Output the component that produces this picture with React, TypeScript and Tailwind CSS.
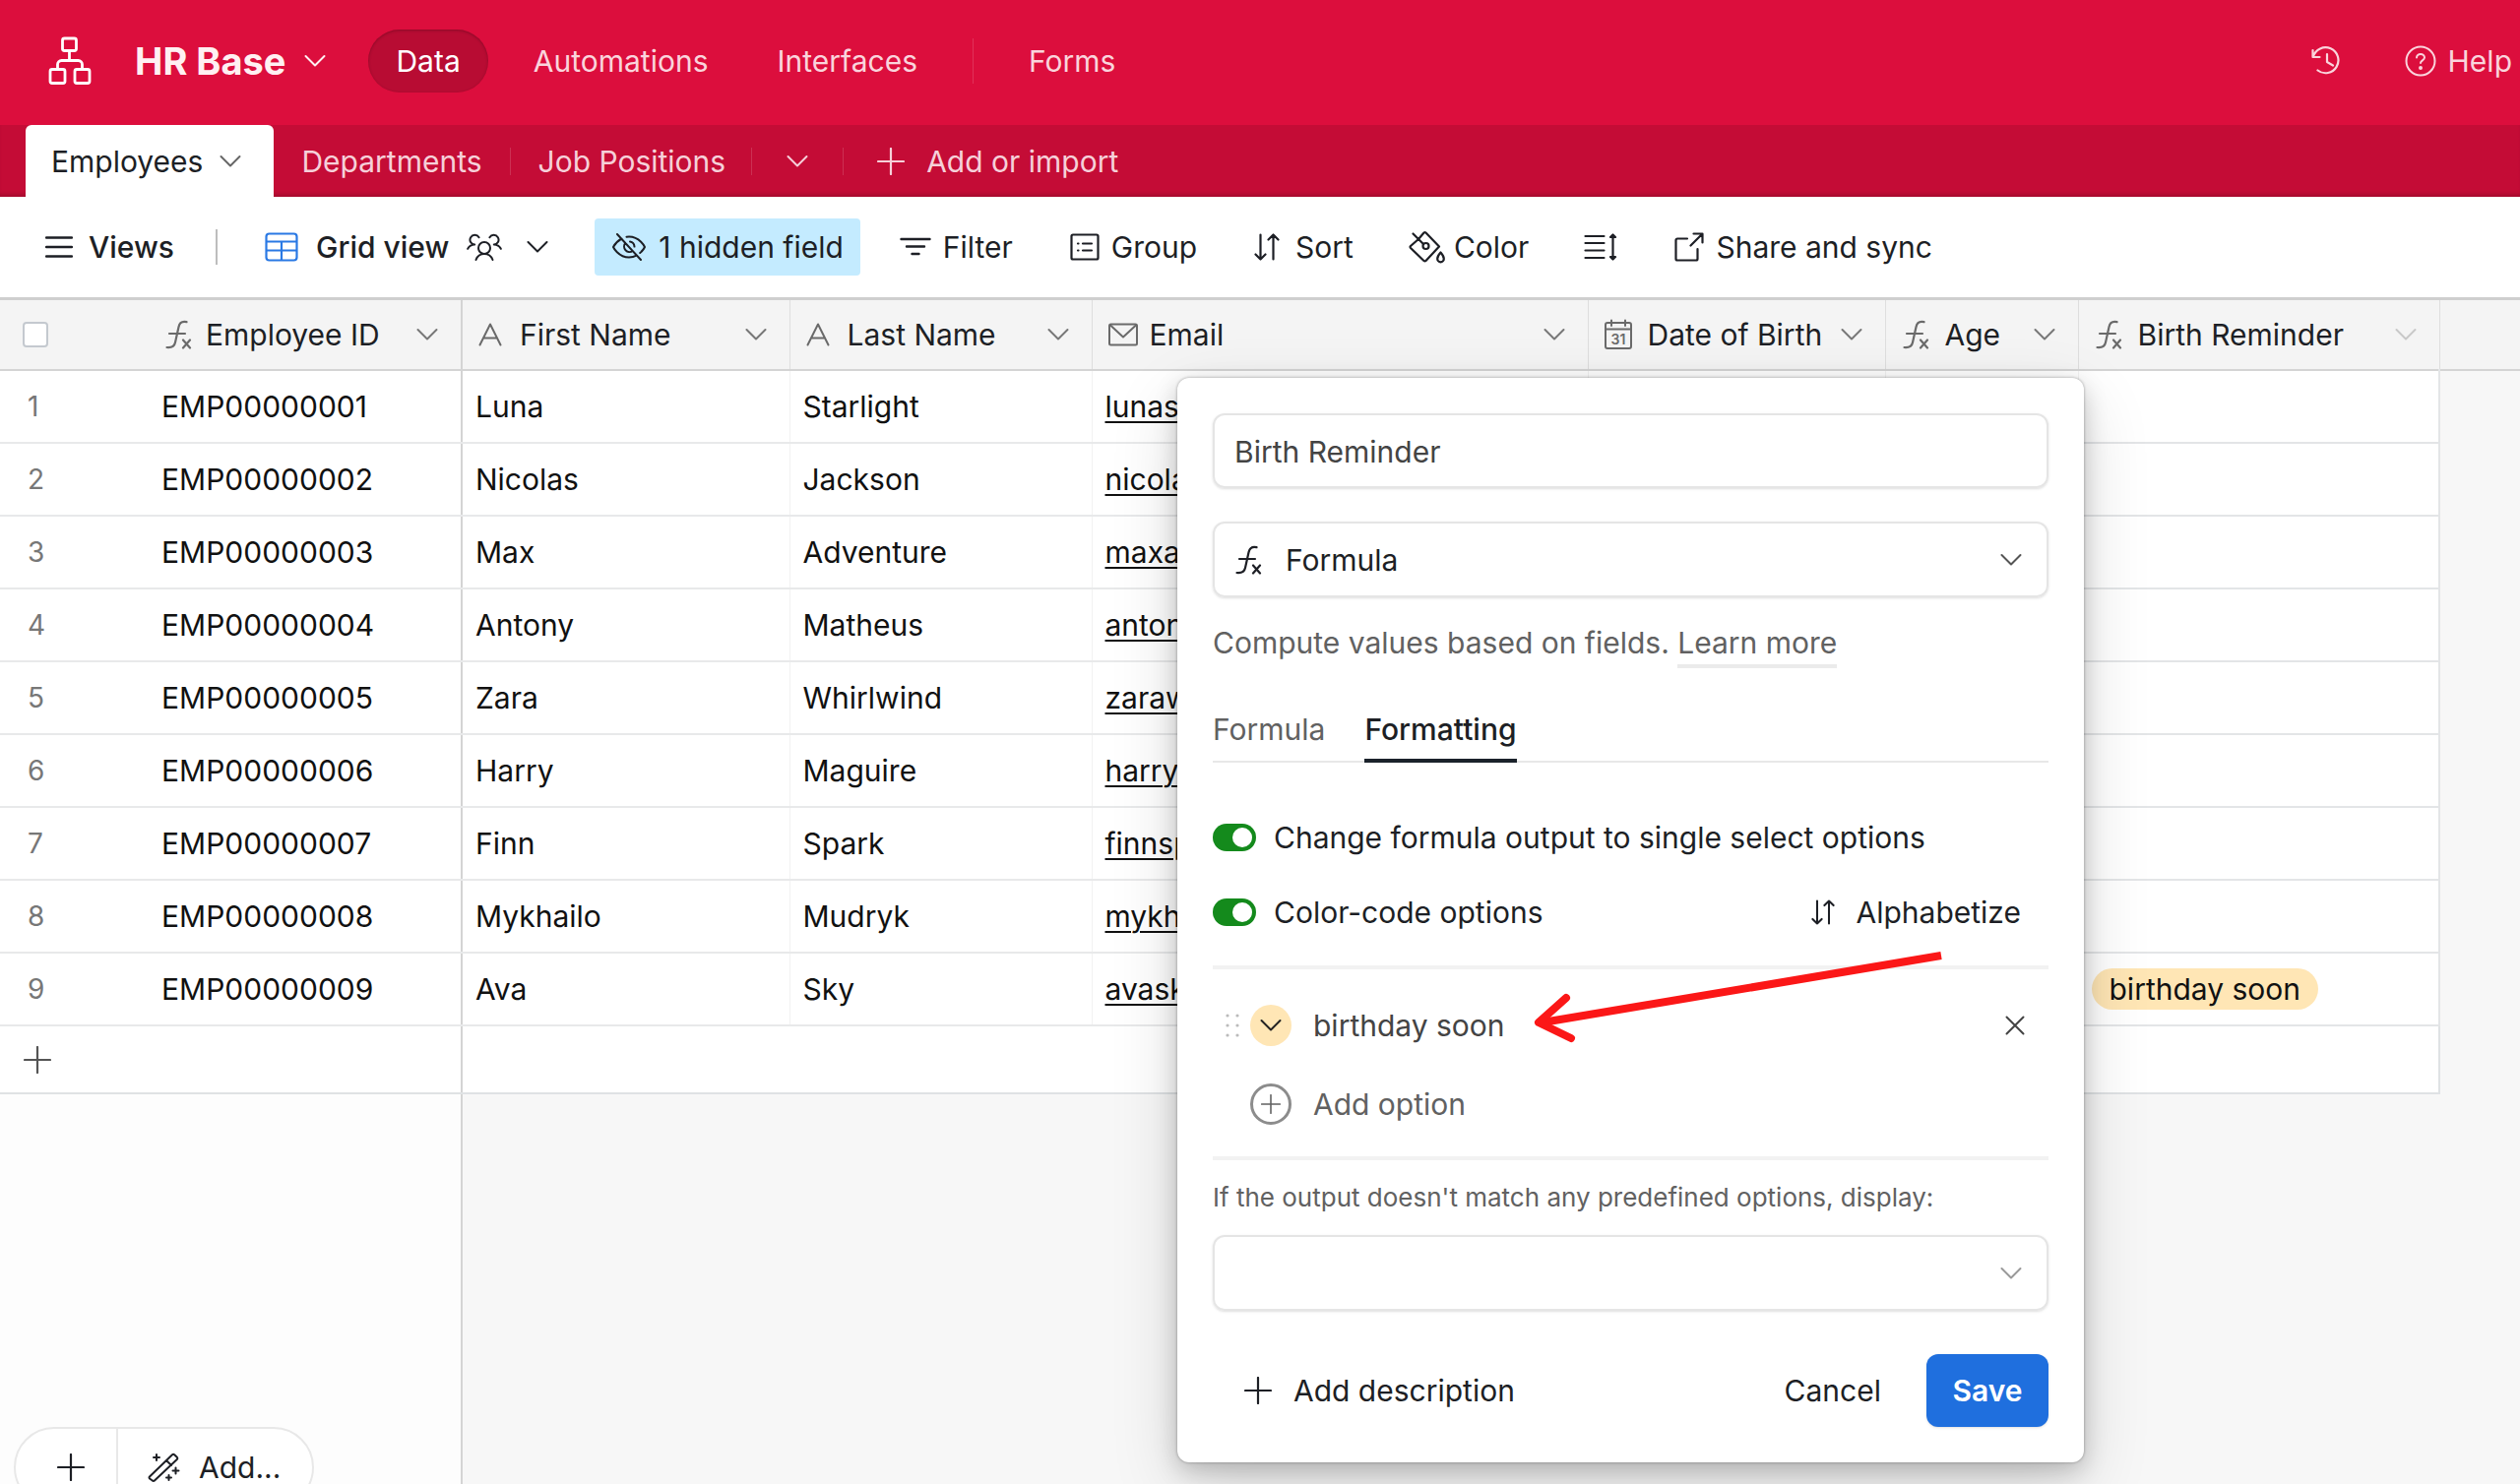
import { useState } from 'react';

const people: [string, string, string][] = [
  ['Luna', 'Starlight', 'lunast'],
  ['Nicolas', 'Jackson', 'nicola'],
  ['Max', 'Adventure', 'maxad'],
  ['Antony', 'Matheus', 'anton'],
  ['Zara', 'Whirlwind', 'zaraw'],
  ['Harry', 'Maguire', 'harry'],
  ['Finn', 'Spark', 'finnsp'],
  ['Mykhailo', 'Mudryk', 'mykh'],
  ['Ava', 'Sky', 'avask'],
];

type IconProps = { className?: string };

const Chevron = ({ className = '' }: IconProps) => (
  <svg viewBox="0 0 24 14" className={`h-3.5 w-6 shrink-0 ${className}`} fill="none" stroke="currentColor" strokeWidth="2" strokeLinecap="round" strokeLinejoin="round">
    <path d="M2.5 2l9.5 9.5L21.500 2" />
  </svg>
);

const Plus = ({ className = 'h-7 w-7' }: IconProps) => (
  <svg viewBox="0 0 28 28" className={`shrink-0 ${className}`} fill="none" stroke="currentColor" strokeWidth="2.2" strokeLinecap="round">
    <path d="M14 1v26M1 14h26" />
  </svg>
);

const Fx = () => (
  <svg viewBox="0 0 28 30" className="h-[30px] w-7 shrink-0" fill="none" stroke="currentColor" strokeWidth="2.2" strokeLinecap="round">
    <path d="M22.500 2.200c-5-1-7.200 1-8 5L11 23c-.8 4-3 5.500-8.500 5M5 14h16M19 20.500l7 8M26 20.500l-7 8" />
  </svg>
);

const LetterA = () => (
  <svg viewBox="0 0 24 24" className="h-6 w-6 shrink-0" fill="none" stroke="currentColor" strokeWidth="2" strokeLinecap="round" strokeLinejoin="round">
    <path d="M1.500 22.500L12 1.500l10.500 21M5.200 15.500h13.600" />
  </svg>
);

const Mail = () => (
  <svg viewBox="0 0 30 24" className="h-6 w-[30px] shrink-0" fill="none" stroke="currentColor" strokeWidth="2" strokeLinejoin="round">
    <rect x="1" y="1.500" width="28" height="21" rx="1.500" />
    <path d="M1.500 2L15 14.500 28.500 2" />
  </svg>
);

const Calendar = () => (
  <svg viewBox="0 0 28 32" className="h-8 w-7 shrink-0" fill="none" stroke="currentColor" strokeWidth="2" strokeLinecap="round" strokeLinejoin="round">
    <rect x="1" y="4" width="26" height="26" rx="2" />
    <path d="M1 10.500h26M7 1.500v5.500M21 1.500v5.500" />
    <text x="14" y="25.500" textAnchor="middle" fontSize="14" fontWeight="600" fill="currentColor" stroke="none">31</text>
  </svg>
);

const Logo = () => (
  <svg viewBox="0 0 44 50" className="h-[50px] w-11 shrink-0" fill="none" stroke="currentColor" strokeWidth="2.800" strokeLinejoin="round">
    <rect x="14.500" y="2" width="14" height="12.500" rx="2" />
    <rect x="2" y="33.500" width="15" height="14" rx="2" />
    <rect x="27" y="33.500" width="15" height="14" rx="2" />
    <path d="M21.500 14.500v10M9.500 33.500v-5a4 4 0 0 1 4-4h17a4 4 0 0 1 4 4v5" />
  </svg>
);

const History = () => (
  <svg viewBox="0 0 32 32" className="h-8 w-8 shrink-0" fill="none" stroke="currentColor" strokeWidth="2.200" strokeLinecap="round" strokeLinejoin="round">
    <path d="M2.500 5v7h7M3 11.500A13 13 0 1 1 7.500 25.500M17 9v8l6 3.500" />
  </svg>
);

const Help = () => (
  <svg viewBox="0 0 32 32" className="h-8 w-8 shrink-0" fill="none" stroke="currentColor" strokeWidth="2" strokeLinecap="round">
    <circle cx="16" cy="16" r="14.500" />
    <path d="M12 12.500c0-2 1.800-3.500 4-3.500s4 1.500 4 3.600c0 2.600-4 3-4 5.400" />
    <circle cx="16" cy="23" r="1" fill="currentColor" />
  </svg>
);

const Lines = () => (
  <svg viewBox="0 0 28 24" className="h-6 w-7 shrink-0" stroke="currentColor" strokeWidth="2.400" strokeLinecap="round">
    <path d="M1 2.500h26M1 12h26M1 21.500h26" />
  </svg>
);

const GridIcon = () => (
  <svg viewBox="0 0 34 30" className="h-[30px] w-[34px] shrink-0 text-[#2a79e4]" fill="none" stroke="currentColor" strokeWidth="2.200">
    <rect x="1.500" y="1.500" width="31" height="27" rx="3" />
    <path d="M1.500 9.500h31M1.500 18.500h31M17 9.500v19" />
  </svg>
);

const People = () => (
  <svg viewBox="0 0 36 28" className="h-7 w-9 shrink-0" fill="none" stroke="currentColor" strokeWidth="2" strokeLinecap="round" strokeLinejoin="round">
    <circle cx="18" cy="15" r="6" />
    <path d="M9.500 27c1.500-4 4.700-6 8.500-6s7 2 8.500 6M1.200 15.800c1.500-2.800 3.800-4.200 7-4.200a4.900 4.900 0 1 1 4.400-7.400M34.800 15.800c-1.500-2.800-3.800-4.200-7-4.200a4.900 4.900 0 1 0-4.400-7.400" />
  </svg>
);

const EyeOff = () => (
  <svg viewBox="0 0 36 28" className="h-7 w-9 shrink-0" fill="none" stroke="currentColor" strokeWidth="2" strokeLinecap="round" strokeLinejoin="round">
    <path d="M6 1l24 26M10.500 5.500C5 8.500 2 14 2 14s5 10.500 16 10.500c3 0 5.500-.7 7.600-1.800M15.500 3.700A17 17 0 0 1 18 3.500c11 0 16 10.500 16 10.500s-1.500 3.200-4.800 6M14.300 10a5.500 5.500 0 0 0 7.400 8M19 8.600a5.500 5.500 0 0 1 4.500 5" />
  </svg>
);

const FilterIcon = () => (
  <svg viewBox="0 0 32 20" className="h-5 w-8 shrink-0" stroke="currentColor" strokeWidth="2.400" strokeLinecap="round">
    <path d="M1.500 2h29M7 9.500h18M12.500 17h7" />
  </svg>
);

const GroupIcon = () => (
  <svg viewBox="0 0 30 28" className="h-7 w-[30px] shrink-0" fill="none" stroke="currentColor" strokeWidth="2.200" strokeLinecap="round">
    <rect x="1.500" y="1.500" width="27" height="25" rx="1.500" />
    <path d="M13 10.500h9M13 17.500h9M8 10.500h.5M8 17.500h.5" />
  </svg>
);

const SortIcon = ({ className = 'h-7 w-[26px]' }: IconProps) => (
  <svg viewBox="0 0 26 28" className={`shrink-0 ${className}`} fill="none" stroke="currentColor" strokeWidth="2.200" strokeLinecap="round" strokeLinejoin="round">
    <path d="M6.500 1.500v25M1.500 21.500l5 5 5-5M19.500 26.500v-25M14.500 6.500l5-5 5 5" />
  </svg>
);

const Bucket = () => (
  <svg viewBox="0 0 38 34" className="h-[34px] w-[38px] shrink-0" fill="none" stroke="currentColor" strokeWidth="2.200" strokeLinecap="round" strokeLinejoin="round">
    <path d="M4.500 3.500l10.500 10.500M10 9l5.500-6.500a1.500 1.500 0 0 1 2 0L31 16.500 17.500 31a1.500 1.500 0 0 1-2 0L2 18a1.500 1.500 0 0 1 0-2z" />
    <circle cx="17.500" cy="16" r="3" />
    <path d="M32.500 22.500s3.300 3.800 3.300 6.500a3.300 3.300 0 0 1-6.600 0c0-2.700 3.300-6.500 3.300-6.500z" />
  </svg>
);

const RowHeight = () => (
  <svg viewBox="0 0 34 28" className="h-7 w-[34px] shrink-0" fill="none" stroke="currentColor" strokeWidth="2.200" strokeLinecap="round" strokeLinejoin="round">
    <path d="M1.500 3h19M1.500 10h19M1.500 17.500h19M1.500 25h19M29.500 2v24" />
    <path d="M27 4l2.500-2.500L32 4zM27 24l2.500 2.500L32 24z" fill="currentColor" />
  </svg>
);

const Share = () => (
  <svg viewBox="0 0 30 30" className="h-[30px] w-[30px] shrink-0" fill="none" stroke="currentColor" strokeWidth="2.200" strokeLinecap="round" strokeLinejoin="round">
    <path d="M19.500 1.500h9v9M28 2L16.500 13.500M23.500 17v10a1.500 1.500 0 0 1-1.500 1.500H3A1.500 1.500 0 0 1 1.500 27V8A1.500 1.500 0 0 1 3 6.500h10" />
  </svg>
);

const Wand = () => (
  <svg viewBox="0 0 34 30" className="h-[30px] w-[34px] shrink-0" fill="none" stroke="currentColor" strokeWidth="2" strokeLinecap="round" strokeLinejoin="round">
    <path d="M2 24.500L25 2.200a1.500 1.500 0 0 1 2.200 0l2.600 2.600a1.500 1.500 0 0 1 0 2.200L7 28.500a1.500 1.500 0 0 1-2.200 0L2 26.500a1.500 1.500 0 0 1 0-2zM19 8l5 5M9 2v6M6 5h6M28.500 15.500v6M25.500 18.500h6M21.500 23v5M19 25.500h5" />
  </svg>
);

const columns = [
  { label: 'First Name', icon: LetterA, width: 'w-[333px]', gap: 'gap-[18px]' },
  { label: 'Last Name', icon: LetterA, width: 'w-[307px]', gap: 'gap-[18px]' },
  { label: 'Email', icon: Mail, width: 'w-[504px]', gap: 'gap-3' },
  { label: 'Date of Birth', icon: Calendar, width: 'w-[302px]', gap: 'gap-4' },
  { label: 'Age', icon: Fx, width: 'w-[196px]', gap: 'gap-4' },
  { label: 'Birth Reminder', icon: Fx, width: 'w-[367px]', gap: 'gap-4' },
];

function TopBar() {
  return (
    <header className="flex h-[127px] items-center bg-[#dc0e3d] pb-1 pl-[49px] pr-2 text-[#fad4dc]">
      <span className="text-white"><Logo /></span>
      <button className="ml-11 flex items-center gap-[18px] text-[38px] font-bold text-[#fff0f2]">HR Base <Chevron /></button>
      <nav className="ml-[42px] flex items-center">
        <a href="#data" className="rounded-full bg-[#b80c33] px-7 py-3 leading-10 text-white shadow-[inset_0_1px_3px_rgba(0,0,0,0.25)]">Data</a>
        <a href="#automations" className="ml-[46px]">Automations</a>
        <a href="#interfaces" className="ml-[70px]">Interfaces</a>
        <span className="ml-14 h-[46px] w-px bg-white/15" />
        <a href="#forms" className="ml-14">Forms</a>
      </nav>
      <button aria-label="History" className="ml-auto"><History /></button>
      <button className="ml-16 flex items-center gap-3"><Help /> Help</button>
    </header>
  );
}

function TableTabs() {
  return (
    <nav className="flex h-[73px] items-center bg-[#c40c36] pl-[26px] text-[#f6d0d9] shadow-[inset_0_-5px_5px_-3px_rgba(0,0,0,0.2)]">
      <button className="flex h-full items-center gap-4 rounded-t-md bg-white pl-[26px] pr-8 text-[#1d1f25]">Employees <Chevron className="text-[#666]" /></button>
      <button className="ml-7">Departments</button>
      <span className="ml-7 h-7 w-px bg-white/15" />
      <button className="ml-7">Job Positions</button>
      <span className="ml-[26px] h-7 w-px bg-white/15" />
      <button aria-label="More tables" className="ml-[34px]"><Chevron /></button>
      <span className="ml-[34px] h-7 w-px bg-white/15" />
      <button className="ml-[34px] flex items-center gap-[22px]"><Plus /> Add or import</button>
    </nav>
  );
}

function Toolbar() {
  return (
    <div className="flex h-[105px] items-center border-b-3 border-[#cfcfcf] bg-white pl-[46px] text-[#1d1f25]">
      <button className="flex items-center gap-4 font-medium"><Lines /> Views</button>
      <span className="ml-[42px] h-9 w-0.5 bg-[#bdbdbd]" />
      <button className="ml-12 flex items-center gap-[18px] font-medium">
        <GridIcon /> Grid view <People /> <Chevron className="ml-1.5" />
      </button>
      <button className="ml-[46px] flex h-[58px] items-center gap-3 rounded bg-[#c4ebff] px-[17px]"><EyeOff /> 1 hidden field</button>
      <button className="ml-10 flex items-center gap-3"><FilterIcon /> Filter</button>
      <button className="ml-[58px] flex items-center gap-3"><GroupIcon /> Group</button>
      <button className="ml-[58px] flex items-center gap-4"><SortIcon /> Sort</button>
      <button className="ml-14 flex items-center gap-2"><Bucket /> Color</button>
      <button aria-label="Row height" className="ml-14"><RowHeight /></button>
      <button className="ml-[58px] flex items-center gap-3"><Share /> Share and sync</button>
    </div>
  );
}

function DataTable() {
  return (
    <table className="w-full table-fixed border-collapse text-left">
      <thead className="h-[71px] bg-[#f4f4f4] text-[#1d1f25]">
        <tr className="border-b-2 border-[#d4d4d4]">
          <th className="w-[154px] pl-[23px] font-normal">
            <input type="checkbox" aria-label="Select all" className="block h-[26px] w-[26px] appearance-none rounded border-2 border-[#c4c9cf] bg-white" />
          </th>
          <th className="w-[315px] border-r-2 border-[#d4d4d4] font-normal">
            <div className="flex items-center gap-3.5 pl-[13px] pr-[22px]">
              <span className="text-[#6a6a6a]"><Fx /></span>
              Employee ID
              <Chevron className="ml-auto text-[#777]" />
            </div>
          </th>
          {columns.map(({ label, icon: Icon, width, gap }) => (
            <th key={label} className={`${width} border-r border-[#dedede] font-normal`}>
              <div className={`flex items-center whitespace-nowrap pl-4 pr-[22px] ${gap}`}>
                <span className="text-[#6a6a6a]"><Icon /></span>
                {label}
                <Chevron className={`ml-auto ${label === 'Birth Reminder' ? 'text-[#c8c8c8]' : 'text-[#777]'}`} />
              </div>
            </th>
          ))}
          <th />
        </tr>
      </thead>
      <tbody className="text-[#111]">
        {people.map(([first, last, email], i) => (
          <tr key={first} className="h-[74px]">
            <td className="border-b-2 border-[#e8e9ea] bg-white pl-7 text-[28px] text-[#777]">{i + 1}</td>
            <td className="border-b-2 border-r-2 border-b-[#e8e9ea] border-r-[#d4d4d4] bg-white pl-2.5">EMP0000000{i + 1}</td>
            <td className="border-b-2 border-r border-b-[#e8e9ea] border-r-[#f2f2f2] bg-white pl-[13px]">{first}</td>
            <td className="border-b-2 border-r border-b-[#e8e9ea] border-r-[#f2f2f2] bg-white pl-[13px]">{last}</td>
            <td className="border-b-2 border-r border-b-[#e8e9ea] border-r-[#f2f2f2] bg-white pl-[13px]">
              <a href={`mailto:${email}`} className="underline decoration-2 underline-offset-4">{email}</a>
            </td>
            <td className="border-b-2 border-r border-b-[#e8e9ea] border-r-[#f2f2f2] bg-white" />
            <td className="border-b-2 border-r border-b-[#e8e9ea] border-r-[#f2f2f2] bg-white" />
            <td className="border-b-2 border-r-2 border-[#e3e5e7] bg-white pl-[13px]">
              {first === 'Ava' && <span className="flex h-[42px] w-fit items-center rounded-full bg-[#ffe6b5] px-[18px]">birthday soon</span>}
            </td>
            <td />
          </tr>
        ))}
        <tr className="h-[69px]">
          <td className="border-b-2 border-[#dfe2e4] bg-white pl-6 text-[#555]">
            <button aria-label="Add record" className="block"><Plus /></button>
          </td>
          <td className="border-b-2 border-r-2 border-b-[#dfe2e4] border-r-[#d4d4d4] bg-white" />
          <td colSpan={6} className="border-b-2 border-r-2 border-[#dfe2e4] bg-white" />
          <td />
        </tr>
      </tbody>
    </table>
  );
}

function Toggle({ label }: { label: string }) {
  const [on, setOn] = useState(true);
  return (
    <label className="flex items-center gap-[18px]">
      <input type="checkbox" role="switch" checked={on} onChange={() => setOn(!on)} className="peer sr-only" />
      <span className="flex h-7 w-11 items-center justify-start rounded-full bg-[#c4c4c4] px-1 peer-checked:justify-end peer-checked:bg-[#148a1c]">
        <span className="h-5 w-5 rounded-full bg-white" />
      </span>
      {label}
    </label>
  );
}

function FieldEditor() {
  return (
    <div role="dialog" aria-label="Edit field" className="absolute left-[1196px] top-[384px] flex w-[921px] flex-col rounded-xl bg-white px-9 pb-9 pt-9 text-[#1d1f25] shadow-[0_0_3px_rgba(0,0,0,0.35),0_8px_24px_rgba(0,0,0,0.2),0_24px_70px_rgba(0,0,0,0.14)]">
      <input aria-label="Field name" defaultValue="Birth Reminder" className="h-[76px] w-full rounded-xl border-2 border-[#e5e5e5] px-5 pt-0.5 text-[#444] shadow-sm" />
      <div className="relative mt-[34px] text-[#1d1f25]">
        <span className="absolute left-[22px] top-6"><Fx /></span>
        <select aria-label="Field type" className="h-[77px] w-full appearance-none rounded-xl border-2 border-[#e5e5e5] bg-transparent pl-[72px] shadow-sm">
          <option>Formula</option>
        </select>
        <Chevron className="absolute right-[26px] top-8 text-[#555]" />
      </div>
      <p className="mt-[26px] leading-10 text-[#616161]">
        Compute values based on fields. <a href="#learn" className="inline-block border-b-4 border-[#ebebeb] pb-0.5">Learn more</a>
      </p>
      <div role="tablist" className="mt-[42px] flex gap-10 border-b-2 border-[#e8e8e8]">
        <button role="tab" className="-mb-0.5 border-b-4 border-transparent pb-2.5 leading-10 text-[#616161]">Formula</button>
        <button role="tab" aria-selected="true" className="-mb-0.5 border-b-4 border-[#1b222b] pb-2.5 font-medium leading-10">Formatting</button>
      </div>
      <div className="mt-14 leading-10"><Toggle label="Change formula output to single select options" /></div>
      <div className="mt-9 flex items-center justify-between leading-10">
        <Toggle label="Color-code options" />
        <button className="mr-7 flex items-center gap-[22px]"><SortIcon className="h-[26px] w-6" /> Alphabetize</button>
      </div>
      <div className="mt-[34px] border-t-4 border-[#f2f2f2]">
        <div className="mt-9 flex items-center pl-3 text-[#444]">
          <svg viewBox="0 0 16 26" className="h-[26px] w-4" fill="#bbb">
            {[3, 13, 23].map((y) => <g key={y}><circle cx="3" cy={y} r="1.600" /><circle cx="13" cy={y} r="1.600" /></g>)}
          </svg>
          <button aria-label="Option color" className="ml-2.5 flex h-[42px] w-[42px] items-center justify-center rounded-full bg-[#ffe6b5] text-[#222]"><Chevron /></button>
          <input aria-label="Option name" defaultValue="birthday soon" className="ml-[22px] h-10 w-56" />
          <button aria-label="Remove option" className="ml-auto mr-6">
            <svg viewBox="0 0 20 20" className="h-5 w-5" stroke="currentColor" strokeWidth="2" strokeLinecap="round"><path d="M1.500 1.500l17 17M18.500 1.500l-17 17" /></svg>
          </button>
        </div>
        <button className="ml-[38px] mt-[38px] flex items-center gap-[22px] leading-10 text-[#616161]">
          <span className="flex h-[42px] w-[42px] items-center justify-center rounded-full border-3 border-[#8c8c8c]"><Plus className="h-5 w-5" /></span>
          Add option
        </button>
      </div>
      <label htmlFor="fallback" className="mt-8 border-t-4 border-[#f2f2f2] pt-[18px] text-[26px] leading-10 text-[#616161]">If the output doesn't match any predefined options, display:</label>
      <div className="relative mt-[18px]">
        <select id="fallback" className="block h-[77px] w-full appearance-none rounded-xl border-2 border-[#e5e5e5] bg-transparent px-6 shadow-sm" />
        <Chevron className="absolute right-[26px] top-8 text-[#999]" />
      </div>
      <div className="mt-11 flex items-center">
        <button className="ml-8 flex items-center gap-[22px]"><Plus /> Add description</button>
        <button className="ml-auto">Cancel</button>
        <button className="ml-[46px] h-[74px] w-[124px] rounded-xl bg-[#1f6fde] font-semibold text-white shadow">Save</button>
      </div>
    </div>
  );
}

export default function App() {
  return (
    <div className="relative flex h-screen flex-col overflow-hidden bg-[#f7f7f7] font-['Inter',sans-serif] text-[30px] leading-9">
      <TopBar />
      <TableTabs />
      <Toolbar />
      <main className="flex grow flex-col">
        <DataTable />
        <div className="flex w-[470px] grow flex-col justify-end border-r-2 border-[#d4d4d4] bg-[#fdfdfd] pl-3.5">
          <div className="-mb-6 flex h-[82px] w-[305px] shrink-0 rounded-full border-2 border-[#e8e8e8] bg-white text-[#1d1f25]">
            <button aria-label="Add row" className="flex w-[104px] items-center justify-end border-r-2 border-[#e8e8e8] pr-8"><Plus /></button>
            <button className="flex items-center gap-[18px] pl-[30px]"><Wand /> Add...</button>
          </div>
        </div>
      </main>
      <FieldEditor />
      {/* pointer to the option row */}
      <svg viewBox="0 0 420 100" className="pointer-events-none absolute left-[1555px] top-[960px] h-[100px] w-[420px]" fill="none" stroke="#fb1717" strokeWidth="8">
        <path d="M417 11L12 79" />
        <path d="M36 54L8 79l33 16" strokeLinecap="round" strokeLinejoin="round" />
      </svg>
    </div>
  );
}
